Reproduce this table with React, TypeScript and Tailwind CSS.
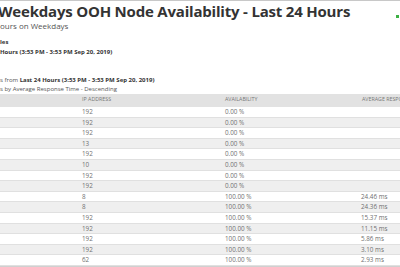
const rows: [string, string, string][] = [
  ["192", "0.00 %", ""],
  ["192", "0.00 %", ""],
  ["192", "0.00 %", ""],
  ["13", "0.00 %", ""],
  ["192", "0.00 %", ""],
  ["10", "0.00 %", ""],
  ["192", "0.00 %", ""],
  ["192", "0.00 %", ""],
  ["8", "100.00 %", "24.46 ms"],
  ["8", "100.00 %", "24.36 ms"],
  ["192", "100.00 %", "15.37 ms"],
  ["192", "100.00 %", "11.15 ms"],
  ["192", "100.00 %", "5.86 ms"],
  ["192", "100.00 %", "3.10 ms"],
  ["62", "100.00 %", "2.93 ms"],
];

export default function App() {
  return (
    <div
      className="relative w-[400px] h-[267px] overflow-hidden bg-white border-t border-[#c8c8c8] text-[#555]"
      style={{ fontFamily: '"Open Sans", sans-serif' }}
    >
      {/* Header */}
      <h1 className="mt-[1px] text-[15px] leading-[18px] font-bold tracking-[-0.2px] text-[#333] whitespace-nowrap -ml-[2px]">
        Weekdays OOH Node Availability - Last 24 Hours
      </h1>
      <div className="mt-[1px] text-[8px] leading-[10px] whitespace-nowrap">ours on Weekdays</div>

      <div className="mt-[7px] text-[6px] leading-[9.5px] font-bold text-[#333] whitespace-nowrap">
        <div>les</div>
        <div>Hours (3:53 PM - 3:53 PM Sep 20, 2019)</div>
      </div>

      <div className="mt-[18.5px] text-[6px] leading-[9px] whitespace-nowrap">
        <div>
          s from <span className="font-bold text-[#333]">Last 24 Hours (3:53 PM - 3:53 PM Sep 20, 2019)</span>
        </div>
        <div>s by Average Response Time - Descending</div>
      </div>

      {/* Table */}
      <div>
        <div className="flex items-center h-[13.5px] bg-[#e2e2e2] text-[5.3px] uppercase text-[#777] whitespace-nowrap">
          <div className="w-[82px] shrink-0" />
          <div className="w-[143px] shrink-0">IP Address</div>
          <div className="w-[137px] shrink-0">Availability</div>
          <div className="shrink-0">Average Response Time</div>
        </div>
        {rows.map(([ip, avail, resp], i) => (
          <div
            key={i}
            className={`flex items-center h-[10.6px] border-b border-[#e0e0e0] text-[6.3px] text-[#707070] whitespace-nowrap ${
              i % 2 === 0 ? "bg-white" : "bg-[#efefef]"
            }`}
          >
            <div className="w-[82px] shrink-0" />
            <div className="w-[143px] shrink-0">{ip}</div>
            <div className="w-[136px] shrink-0">{avail}</div>
            <div className="shrink-0">{resp}</div>
          </div>
        ))}
        <div className="h-[2px] bg-[#d0d0d0]" />
      </div>

      <div className="absolute left-[396px] top-[14px] w-[3px] h-[3px] bg-[#3cb043]" />
    </div>
  );
}
